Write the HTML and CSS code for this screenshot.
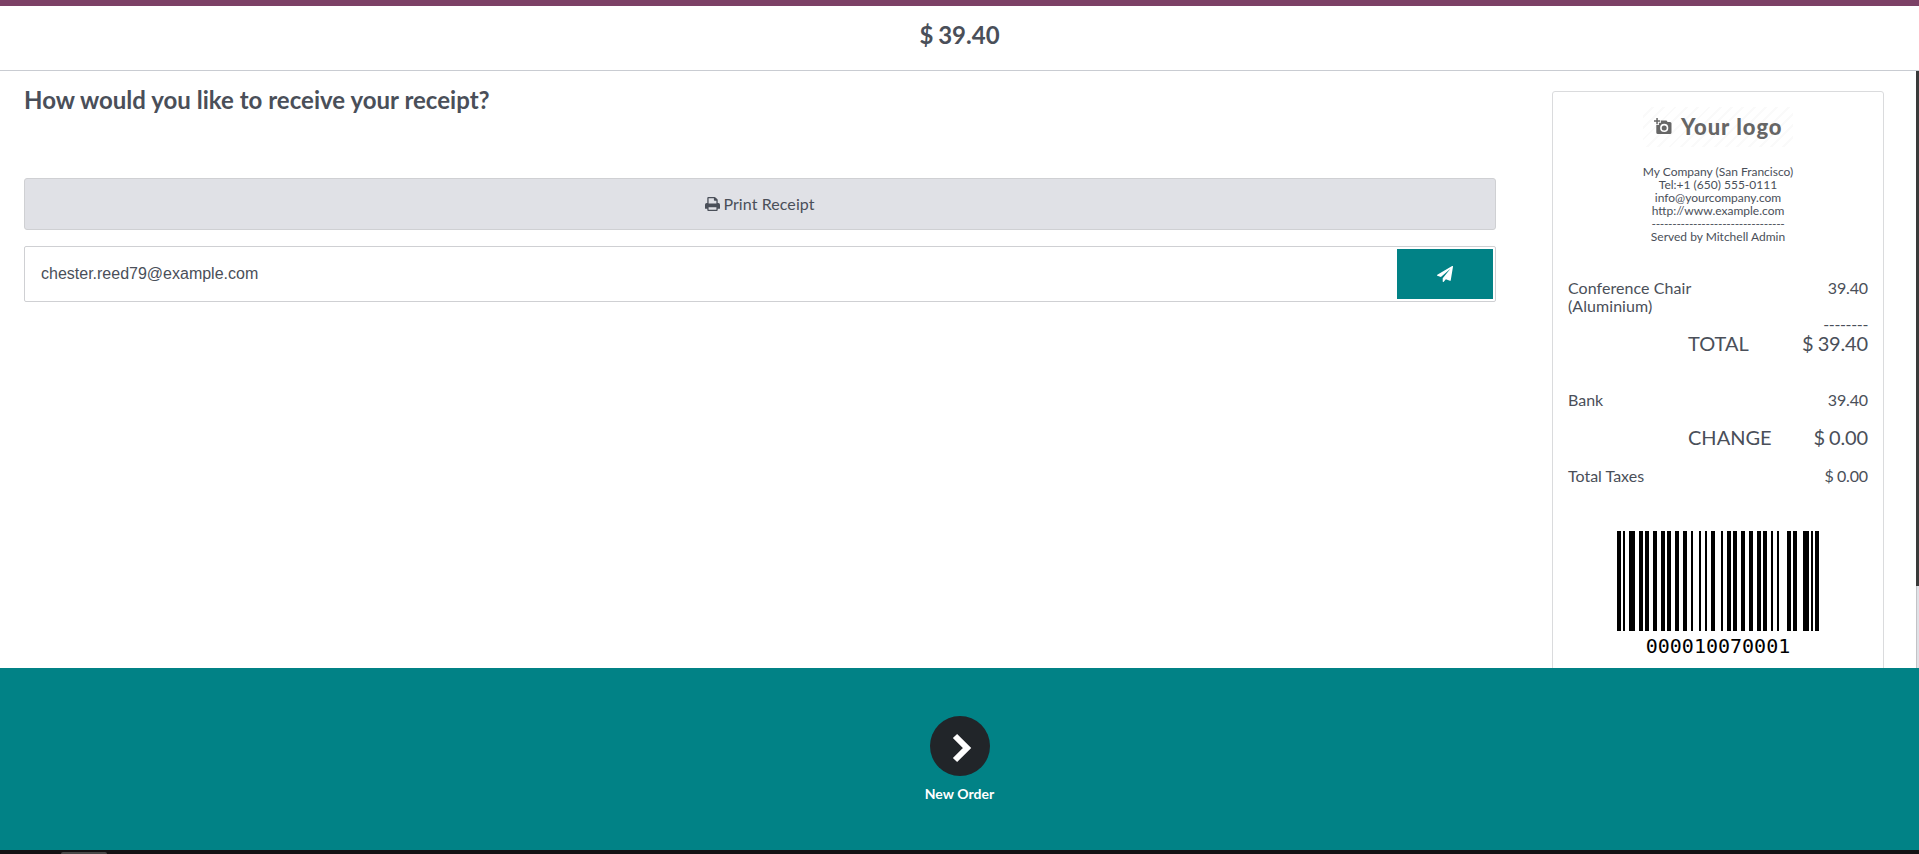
FILE: index.html
```html
<!DOCTYPE html>
<html lang="en">
<head>
<meta charset="utf-8">
<title>Receipt</title>
<link rel="stylesheet" href="styles.css">
</head>
<body>
<div class="pos">
  <div class="accent"></div>
  <header class="top"><h1 class="money">$ 39.40</h1></header>
  <main class="content">
    <section class="actions">
      <h2>How would you like to receive your receipt?</h2>
      <button class="print">
        <svg class="print-icon" viewBox="0 0 15 14"><path fill="currentColor" fill-rule="evenodd" d="M2.300 6V1q0-1 1-1h6.200q.6 0 1 .4l1.700 1.700q.5.500.5 1.200V6h.6Q15 6 15 7.700v3.600q0 .5-.5.500h-1.800V13q0 1-1 1H3.300q-1 0-1-1v-1.200H.5q-.5 0-.5-.5V7.700Q0 6 1.700 6zM3.600 1.200V6.600h7.800V3.700H9.700q-.8 0-.8-.8V1.200zM3.600 10.300v2.500h7.800v-2.500z"/></svg>
        <span>Print Receipt</span>
      </button>
      <div class="email">
        <span class="address">chester.reed79@example.com</span>
        <button class="send" aria-label="Send">
          <svg class="send-icon" viewBox="0 0 1792 1792"><path fill="currentColor" d="M1764 11q33 24 27 64l-256 1536q-5 29-32 45-14 8-31 8-11 0-24-5l-453-185-242 295q-18 23-49 23-13 0-22-4-19-7-30.500-23.500T640 1728v-349l864-1059-1069 925-395-162q-37-14-40-55-2-40 32-59L1696 9q15-9 32-9 20 0 36 11z"/></svg>
        </button>
      </div>
    </section>
    <aside class="side">
      <div class="receipt">
        <div class="logo">
          <svg class="camera" viewBox="0 0 18 17"><path fill="#666" fill-rule="evenodd" d="M2.300 0h1.500v2.300h2.400v1.500H3.800v2.400H2.300V3.800H0V2.300h2.300zM7 2.500h5.500L13.600 4H16q1.500 0 1.500 1.500v9q0 1.500-1.500 1.500H3.800q-1.500 0-1.500-1.500V7h2.600V4.800H7zM10.200 5.800a4.100 4.100 0 1 0 0 8.200 4.100 4.100 0 0 0 0-8.200z"/><circle cx="10.200" cy="9.900" r="2.500" fill="#666"/></svg>
          <span>Your logo</span>
        </div>
        <div class="company">
          <div>My Company (San Francisco)</div>
          <div>Tel:+1 (650) 555-0111</div>
          <div>info@yourcompany.com</div>
          <div>http://www.example.com</div>
          <div class="rule">--------------------------------</div>
          <div>Served by Mitchell Admin</div>
        </div>
        <div class="row"><span class="product">Conference Chair (Aluminium)</span><span class="money">39.40</span></div>
        <div class="dashes">--------</div>
        <div class="row big total"><span>TOTAL</span><span class="money">$ 39.40</span></div>
        <div class="row bank"><span>Bank</span><span class="money">39.40</span></div>
        <div class="row big change"><span>CHANGE</span><span class="money">$ 0.00</span></div>
        <div class="row taxes"><span>Total Taxes</span><span class="money">$ 0.00</span></div>
        <div class="barcode">
          <svg class="bars" viewBox="0 0 101 50" preserveAspectRatio="none" shape-rendering="crispEdges"><path d="M0 0h2v50h-2zM3 0h1v50h-1zM6 0h3v50h-3zM11 0h2v50h-2zM14 0h2v50h-2zM18 0h2v50h-2zM22 0h2v50h-2zM25 0h2v50h-2zM29 0h2v50h-2zM33 0h2v50h-2zM37 0h1v50h-1zM41 0h1v50h-1zM44 0h1v50h-1zM47 0h2v50h-2zM52 0h1v50h-1zM55 0h2v50h-2zM58 0h2v50h-2zM62 0h2v50h-2zM66 0h2v50h-2zM70 0h2v50h-2zM73 0h2v50h-2zM77 0h1v50h-1zM80 0h1v50h-1zM85 0h2v50h-2zM88 0h2v50h-2zM93 0h3v50h-3zM97 0h1v50h-1zM99 0h2v50h-2z"/></svg>
          <div class="code">000010070001</div>
        </div>
      </div>
    </aside>
    <div class="scrollbar"><div class="thumb"></div></div>
  </main>
  <footer class="next">
    <div class="circle">
      <svg class="chevron" viewBox="0 0 20 30"><path fill="none" stroke="#fff" stroke-width="6" d="M3 3l12 12L3 27"/></svg>
    </div>
    <div class="label">New Order</div>
  </footer>
  <div class="taskbar"><div class="tab"></div></div>
</div>
</body>
</html>
```
FILE: styles.css
```css
* { box-sizing: border-box; }
body {
  margin: 0;
  overflow: hidden;
  background: #fff;
  color: #4a4f59;
  font-family: Lato, "Open Sans", sans-serif;
  font-size: 16px;
}
button { font: inherit; color: inherit; border: 0; padding: 0; }
.pos { display: flex; flex-direction: column; height: 854px; }
.accent { height: 6px; background: #7c4166; flex: none; }
.top { height: 65px; flex: none; border-bottom: 1px solid #c9ccd2; padding-top: 14px; }
h1, h2 { margin: 0; font-size: 24px; font-weight: 700; line-height: 29px; }
h1 { text-align: center; }
h2 { letter-spacing: 0.02px; }
.money { word-spacing: -0.04em; letter-spacing: -0.008em; }
h1.money { letter-spacing: 0; }
.content { display: flex; height: 597px; flex: none; overflow: hidden; }
.actions { width: 1496px; flex: none; padding: 14px 0 0 24px; }
.print {
  display: flex; align-items: center; justify-content: center; gap: 3px;
  width: 100%; height: 52px; margin-top: 64px; padding-bottom: 2px;
  background: #e0e1e6; border: 1px solid #cfd0d3; border-radius: 3px;
}
.print span { letter-spacing: 0.08px; }
.print-icon { width: 15px; height: 14px; margin-top: 1px; }
.email {
  display: flex; align-items: center; justify-content: space-between;
  height: 56px; margin-top: 16px; padding: 0 2px 0 16px;
  border: 1px solid #cfd0d3; border-radius: 2px;
}
.address { font-family: "Liberation Sans", Arial, sans-serif; line-height: 18px; }
.send {
  display: flex; align-items: center; justify-content: center;
  width: 96px; height: 50px; background: #018286; color: #fff;
}
.send-icon { width: 16px; height: 16px; }
.side { flex: 1; padding: 20px 0 0 56px; }
.receipt {
  width: 332px; height: 700px; padding: 15px;
  border: 1px solid #dadbdd; border-radius: 3px;
}
.logo {
  display: flex; align-items: center; gap: 9px;
  width: 150px; height: 40px; margin: 0 auto; padding: 0 0 2px 11px;
  background: repeating-linear-gradient(135deg, #fff 0 6px, #fafafa 6px 8px);
  color: #666; font-family: Lato, sans-serif; font-size: 22px; font-weight: 900;
  letter-spacing: 1px; white-space: nowrap;
}
.camera { width: 18px; height: 17px; flex: none; }
.company { margin-top: 18px; text-align: center; font-size: 12px; line-height: 13px; }
.rule { letter-spacing: -0.3px; }
.row { display: flex; justify-content: space-between; line-height: 18px; }
.company + .row { margin-top: 36px; }
.product { width: 150px; letter-spacing: 0.06px; }
.dashes { text-align: right; line-height: 18px; letter-spacing: -0.35px; }
.big { font-size: 20px; line-height: 24px; padding-left: 120px; }
.total { margin-top: -2px; }
.bank { margin-top: 36px; }
.change { margin-top: 16px; }
.taxes { margin-top: 18px; }
.barcode { display: flex; flex-direction: column; align-items: center; margin-top: 46px; }
.bars { display: block; width: 202px; height: 100px; }
.code { margin-top: 3px; color: #000; font: 20px/24px "DejaVu Sans Mono", monospace; }
.scrollbar { width: 3px; background: #e0e1e6; border-left: 1px solid #c2c3c6; }
.thumb { width: 3px; height: 515px; margin-left: -1px; background: #3a3a3a; }
.next {
  display: flex; flex-direction: column; align-items: center;
  height: 182px; flex: none; padding-top: 48px; background: #018286; color: #fff;
}
.circle {
  display: flex; align-items: center; justify-content: center;
  width: 60px; height: 60px; border-radius: 50%; background: #212529;
}
.chevron { width: 20px; height: 30px; margin: 3px 0 0 5px; }
.label { margin-top: 9px; font-size: 14px; font-weight: 700; line-height: 18px; letter-spacing: 0.04px; }
.taskbar { flex: 1; background: #141214; padding: 2px 0 0 61px; }
.tab { width: 46px; height: 2px; background: #484848; border-radius: 2px 2px 0 0; }
```
